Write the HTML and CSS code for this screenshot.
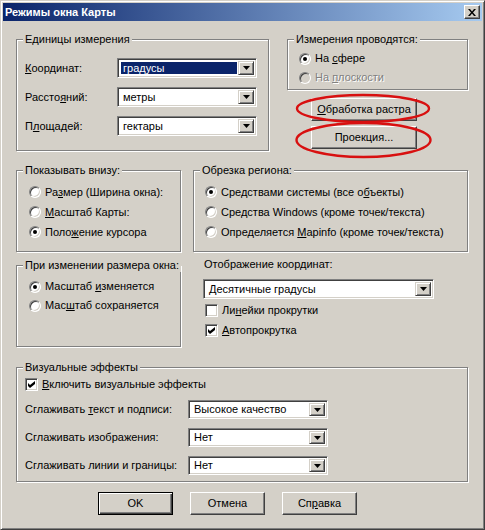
FILE: index.html
```html
<!DOCTYPE html>
<html lang="ru">
<head>
<meta charset="utf-8">
<title>Режимы окна Карты</title>
<link rel="stylesheet" href="styles.css">
</head>
<body>
<div class="window">
  <div class="titlebar">
    <span class="title">Режимы окна Карты</span>
    <span class="close"><svg width="8" height="7" viewBox="0 0 8 7"><path d="M0 0h2l2 2.5L6 0h2L5 3.5 8 7H6L4 4.5 2 7H0l3-3.5z" fill="#000"/></svg></span>
  </div>
  <div class="content">
    <div class="row row-a">
      <div class="group g-units">
        <div class="gtitle">Единицы измерения</div>
        <div class="form-grid units-grid">
          <span class="lbl"><u>К</u>оординат:</span>
          <div class="combo"><span class="val sel">градусы</span><span class="drop"><svg width="7" height="4" viewBox="0 0 7 4"><path d="M0 0h7L3.5 4z"/></svg></span></div>
          <span class="lbl">Рассто<u>я</u>ний:</span>
          <div class="combo"><span class="val">метры</span><span class="drop"><svg width="7" height="4" viewBox="0 0 7 4"><path d="M0 0h7L3.5 4z"/></svg></span></div>
          <span class="lbl">П<u>л</u>ощадей:</span>
          <div class="combo"><span class="val">гектары</span><span class="drop"><svg width="7" height="4" viewBox="0 0 7 4"><path d="M0 0h7L3.5 4z"/></svg></span></div>
        </div>
      </div>
      <div class="col-a">
        <div class="group g-measure">
          <div class="gtitle">Измерения проводятся:</div>
          <div class="opts opts-measure">
            <div class="opt"><span class="radio on"></span><span>На <u>с</u>фере</span></div>
            <div class="opt disabled"><span class="radio"></span><span>На <u>п</u>лоскости</span></div>
          </div>
        </div>
        <button class="btn btn-side btn-raster"><u>О</u>бработка растра</button>
        <button class="btn btn-side btn-proj">Проекция...</button>
      </div>
    </div>

    <div class="row row-b">
      <div class="group g-bottom">
        <div class="gtitle">Показывать внизу:</div>
        <div class="opts opts-b">
          <div class="opt"><span class="radio"></span><span>Ра<u>з</u>мер (Ширина окна):</span></div>
          <div class="opt"><span class="radio"></span><span><u>М</u>асштаб Карты:</span></div>
          <div class="opt"><span class="radio on"></span><span>Поло<u>ж</u>ение курсора</span></div>
        </div>
      </div>
      <div class="group g-clip">
        <div class="gtitle">Обрезка региона:</div>
        <div class="opts opts-b opts-clip">
          <div class="opt"><span class="radio on"></span><span>Средствами системы (все о<u>б</u>ъекты)</span></div>
          <div class="opt"><span class="radio"></span><span>Сре<u>д</u>ства Windows (кроме точек/текста)</span></div>
          <div class="opt"><span class="radio"></span><span>Определяется <u>M</u>apinfo (кроме точек/текста)</span></div>
        </div>
      </div>
    </div>

    <div class="row row-c">
      <div class="group g-resize">
        <div class="gtitle">При изменении размера окна:</div>
        <div class="opts opts-c">
          <div class="opt"><span class="radio on"></span><span>Масштаб <u>и</u>зменяется</span></div>
          <div class="opt"><span class="radio"></span><span>Мас<u>ш</u>таб сохраняется</span></div>
        </div>
      </div>
      <div class="col-c">
        <div class="coord-label">Отображение координат:</div>
        <div class="combo combo-coord"><span class="val">Десятичные градусы</span><span class="drop"><svg width="7" height="4" viewBox="0 0 7 4"><path d="M0 0h7L3.5 4z"/></svg></span></div>
        <div class="checks">
          <div class="opt chk-row"><span class="check"></span><span>Ли<u>н</u>ейки прокрутки</span></div>
          <div class="opt chk-row"><span class="check"><svg width="7" height="7" viewBox="0 0 7 7"><path d="M0 2l2 2 5-4v3L2 7 0 5z" fill="#000"/></svg></span><span><u>А</u>втопрокрутка</span></div>
        </div>
      </div>
    </div>

    <div class="row row-d">
      <div class="group g-visual">
        <div class="gtitle">Визуальные эффекты</div>
        <div class="opt chk-row visual-check"><span class="check"><svg width="7" height="7" viewBox="0 0 7 7"><path d="M0 2l2 2 5-4v3L2 7 0 5z" fill="#000"/></svg></span><span><u>В</u>ключить визуальные эффекты</span></div>
        <div class="form-grid visual-grid">
          <span class="lbl">Сглаживать <u>т</u>екст и подписи:</span>
          <div class="combo combo-sm"><span class="val">Высокое качество</span><span class="drop"><svg width="7" height="4" viewBox="0 0 7 4"><path d="M0 0h7L3.5 4z"/></svg></span></div>
          <span class="lbl">Сглаживать изображения:</span>
          <div class="combo combo-sm"><span class="val">Нет</span><span class="drop"><svg width="7" height="4" viewBox="0 0 7 4"><path d="M0 0h7L3.5 4z"/></svg></span></div>
          <span class="lbl">Сглаживать линии и границы:</span>
          <div class="combo combo-sm"><span class="val">Нет</span><span class="drop"><svg width="7" height="4" viewBox="0 0 7 4"><path d="M0 0h7L3.5 4z"/></svg></span></div>
        </div>
      </div>
    </div>

    <div class="row row-e">
      <button class="btn btn-main default">OK</button>
      <button class="btn btn-main">Отмена</button>
      <button class="btn btn-main">Сп<u>р</u>авка</button>
    </div>
  </div>

  <svg class="marks" width="485" height="530" viewBox="0 0 485 530">
    <ellipse cx="363" cy="108.5" rx="66" ry="13.5" fill="none" stroke="#d81010" stroke-width="2.4"/>
    <ellipse cx="363.5" cy="140" rx="67" ry="17" fill="none" stroke="#d81010" stroke-width="2.4"/>
  </svg>
</div>
</body>
</html>
```

FILE: styles.css
```css
* { box-sizing: border-box; }
html, body { margin: 0; padding: 0; background: #d4d0c8; }
body {
  font-family: "Liberation Sans", Arial, sans-serif;
  font-size: 11px;
  line-height: 13px;
  color: #000;
}
u { text-underline-offset: 1px; }

.window {
  position: relative;
  width: 485px;
  height: 530px;
  background: #d4d0c8;
  border: 1px solid;
  border-color: #d4d0c8 #404040 #404040 #d4d0c8;
  box-shadow: inset 1px 1px #fff, inset -1px -1px #808080;
  padding: 2px;
}

.titlebar {
  height: 18px;
  display: flex;
  align-items: center;
  justify-content: space-between;
  background: linear-gradient(to right, #0a246a, #a6caf0);
  padding: 0 2px;
  color: #fff;
  font-weight: bold;
}
.close {
  width: 16px;
  height: 14px;
  background: #d4d0c8;
  border: 1px solid;
  border-color: #fff #404040 #404040 #fff;
  box-shadow: inset -1px -1px #808080;
  display: flex;
  align-items: center;
  justify-content: center;
}

.content { padding: 18px 0 0 13px; }
.row { display: flex; align-items: flex-start; }

/* group box */
.group {
  border: 1px solid #808080;
  box-shadow: inset 1px 1px #fff, 1px 1px #fff;
}
.gtitle {
  display: table;
  margin: -7px 0 0 6px;
  padding: 0 2px;
  height: 13px;
  white-space: nowrap;
  background: #d4d0c8;
}

/* options */
.opt { display: flex; align-items: center; gap: 4px; white-space: nowrap; }
.radio {
  flex: none;
  position: relative;
  width: 12px;
  height: 12px;
  border-radius: 50%;
  background: #fff;
  border: 1px solid;
  border-color: #808080 #fff #fff #808080;
  box-shadow: inset 1px 1px #404040, inset -1px -1px #d4d0c8;
}
.radio.on::after {
  content: "";
  position: absolute;
  left: 3px;
  top: 3px;
  width: 4px;
  height: 4px;
  border-radius: 50%;
  background: #000;
}
.disabled { color: #808080; text-shadow: 1px 1px #fff; }
.disabled .radio { background: #d4d0c8; }

.check {
  flex: none;
  width: 13px;
  height: 13px;
  background: #fff;
  border: 1px solid;
  border-color: #808080 #fff #fff #808080;
  box-shadow: inset 1px 1px #404040, inset -1px -1px #d4d0c8;
  display: flex;
  align-items: center;
  justify-content: center;
}

/* combo box */
.combo {
  height: 20px;
  display: flex;
  align-items: stretch;
  padding: 2px;
  background: #fff;
  border: 1px solid;
  border-color: #808080 #fff #fff #808080;
  box-shadow: inset 1px 1px #404040, inset -1px -1px #d4d0c8;
}
.combo .val {
  flex: 1;
  display: flex;
  align-items: center;
  margin: 1px;
  padding-left: 2px;
  white-space: nowrap;
}
.combo .val.sel { background: #0a246a; color: #fff; }
.combo .drop {
  flex: none;
  width: 16px;
  background: #d4d0c8;
  border: 1px solid;
  border-color: #d4d0c8 #404040 #404040 #d4d0c8;
  box-shadow: inset 1px 1px #fff, inset -1px -1px #808080;
  display: flex;
  align-items: center;
  justify-content: center;
}
.combo-sm { height: 19px; }

.form-grid { display: grid; align-items: center; }
.lbl { white-space: nowrap; }

/* buttons */
.btn {
  font: inherit;
  color: #000;
  height: 23px;
  padding: 0;
  background: #d4d0c8;
  border: 1px solid;
  border-color: #fff #404040 #404040 #fff;
  box-shadow: inset -1px -1px #808080;
}
.btn.default {
  border-color: #000;
  box-shadow: inset 1px 1px #fff, inset -1px -1px #404040, inset -2px -2px #808080;
}

/* row A */
.g-units { width: 253px; padding-bottom: 14px; }
.units-grid {
  margin-top: 12px;
  padding-left: 8px;
  grid-template-columns: 92px 140px;
  row-gap: 9px;
}
.col-a { width: 181px; margin-left: 18px; display: flex; flex-direction: column; }
.g-measure { padding-bottom: 2px; }
.opts-measure { margin-top: 3px; padding-left: 11px; }
.opts-measure .opt { height: 19px; }
.btn-side { width: 106px; margin-left: 24px; }
.btn-raster { margin-top: 8px; }
.btn-proj { margin-top: 5px; }

/* row B */
.row-b { margin-top: 19px; }
.g-bottom { width: 165px; padding-bottom: 9px; }
.g-clip { width: 275px; margin-left: 12px; padding-bottom: 9px; }
.opts-b { margin-top: 5px; padding-left: 12px; }
.opts-clip { padding-left: 11px; }
.opts-b .opt { height: 20px; }

/* row C */
.row-c { margin-top: 13px; }
.g-resize { width: 165px; padding-bottom: 31px; }
.opts-c { margin-top: 5px; padding-left: 12px; }
.opts-c .opt { height: 19px; }
.col-c { width: 231px; margin-left: 22px; }
.coord-label { margin-top: -7px; padding-left: 1px; }
.combo-coord { margin-top: 8px; }
.checks { margin-top: 1px; padding-left: 2px; }
.checks .opt { height: 20px; }

/* row D */
.row-d { margin-top: 20px; }
.g-visual { width: 452px; padding-bottom: 6px; }
.visual-check { height: 19px; margin-top: 1px; padding-left: 8px; }
.visual-grid {
  margin-top: 6px;
  padding-left: 8px;
  grid-template-columns: 163px 140px;
  row-gap: 9px;
}

/* row E */
.row-e { margin-top: 10px; margin-left: 82px; gap: 17px; }
.btn-main { width: 75px; }

/* annotation overlay */
.marks {
  position: absolute;
  left: -1px;
  top: -1px;
  pointer-events: none;
}
```
